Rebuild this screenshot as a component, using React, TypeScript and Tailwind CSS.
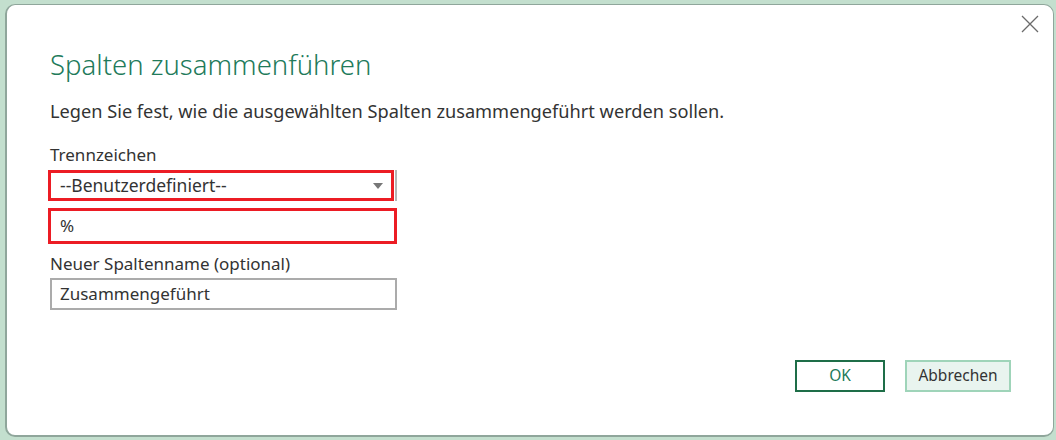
import React from "react";

export default function App() {
  return (
    <div
      className="w-[1056px] h-[440px] bg-[#c3dfce] pt-[4px] pl-[5px] pr-[2px] pb-[3px] overflow-hidden"
      style={{ fontFamily: '"Noto Sans", "Open Sans", sans-serif' }}
    >
      <div className="relative w-full h-full bg-white rounded-[10px] border-l-2 border-b-2 border-t border-r border-[#8fa69b] flex flex-col pl-[41px] pt-[40px]">
        <button className="absolute right-[12px] top-[8px] w-[22px] h-[22px] flex items-center justify-center">
          <svg width="20" height="20" viewBox="0 0 20 20">
            <path d="M2 2 L18 18 M18 2 L2 18" stroke="#6b6b6b" strokeWidth="1.3" />
          </svg>
        </button>
        <h1 className="ml-[2px] text-[27.5px] leading-[40px] font-light text-[#217a5a]">Spalten zusammenführen</h1>
        <p className="ml-[2px] mt-[14px] text-[18.2px] leading-[24px] text-[#333333]">
          Legen Sie fest, wie die ausgewählten Spalten zusammengeführt werden sollen.
        </p>
        <div className="ml-[2px] mt-[20px] text-[17px] leading-[24px] text-[#333333]">Trennzeichen</div>
        <div className="mt-[3px] w-[346px] h-[31px] border-[3px] border-[#ec1c24] flex items-center justify-between pl-[9px] pr-[8px] relative">
          <span className="text-[17.5px] text-[#333333]">--Benutzerdefiniert--</span>
          <svg width="10" height="6" viewBox="0 0 10 6">
            <path d="M0 0 H10 L5 6 Z" fill="#777777" />
          </svg>
          <div className="absolute right-[-6px] top-[-3px] w-[2px] h-[31px] bg-[#b5b5b5]" />
        </div>
        <div className="mt-[7px] w-[349px] h-[36px] border-[3px] border-[#ec1c24] flex items-center pl-[9px]">
          <span className="text-[17px] text-[#333333]">%</span>
        </div>
        <div className="ml-[2px] mt-[8px] text-[17px] leading-[24px] text-[#333333]">Neuer Spaltenname (optional)</div>
        <div className="mt-[2px] ml-[2px] w-[347px] h-[32px] border-2 border-[#ababab] flex items-center pl-[8px]">
          <span className="text-[17px] text-[#333333]">Zusammengeführt</span>
        </div>
        <div className="flex-1" />
        <div className="flex justify-end gap-[20px] pr-[42px] pb-[43px]">
          <button className="w-[90px] h-[32px] border-2 border-[#1e6e48] text-[15.5px] text-[#217a5a] flex items-center justify-center">
            OK
          </button>
          <button className="w-[106px] h-[32px] border-2 border-[#9fd4b9] bg-[#e9f4ef] text-[15.5px] text-[#333333] flex items-center justify-center">
            Abbrechen
          </button>
        </div>
      </div>
    </div>
  );
}
